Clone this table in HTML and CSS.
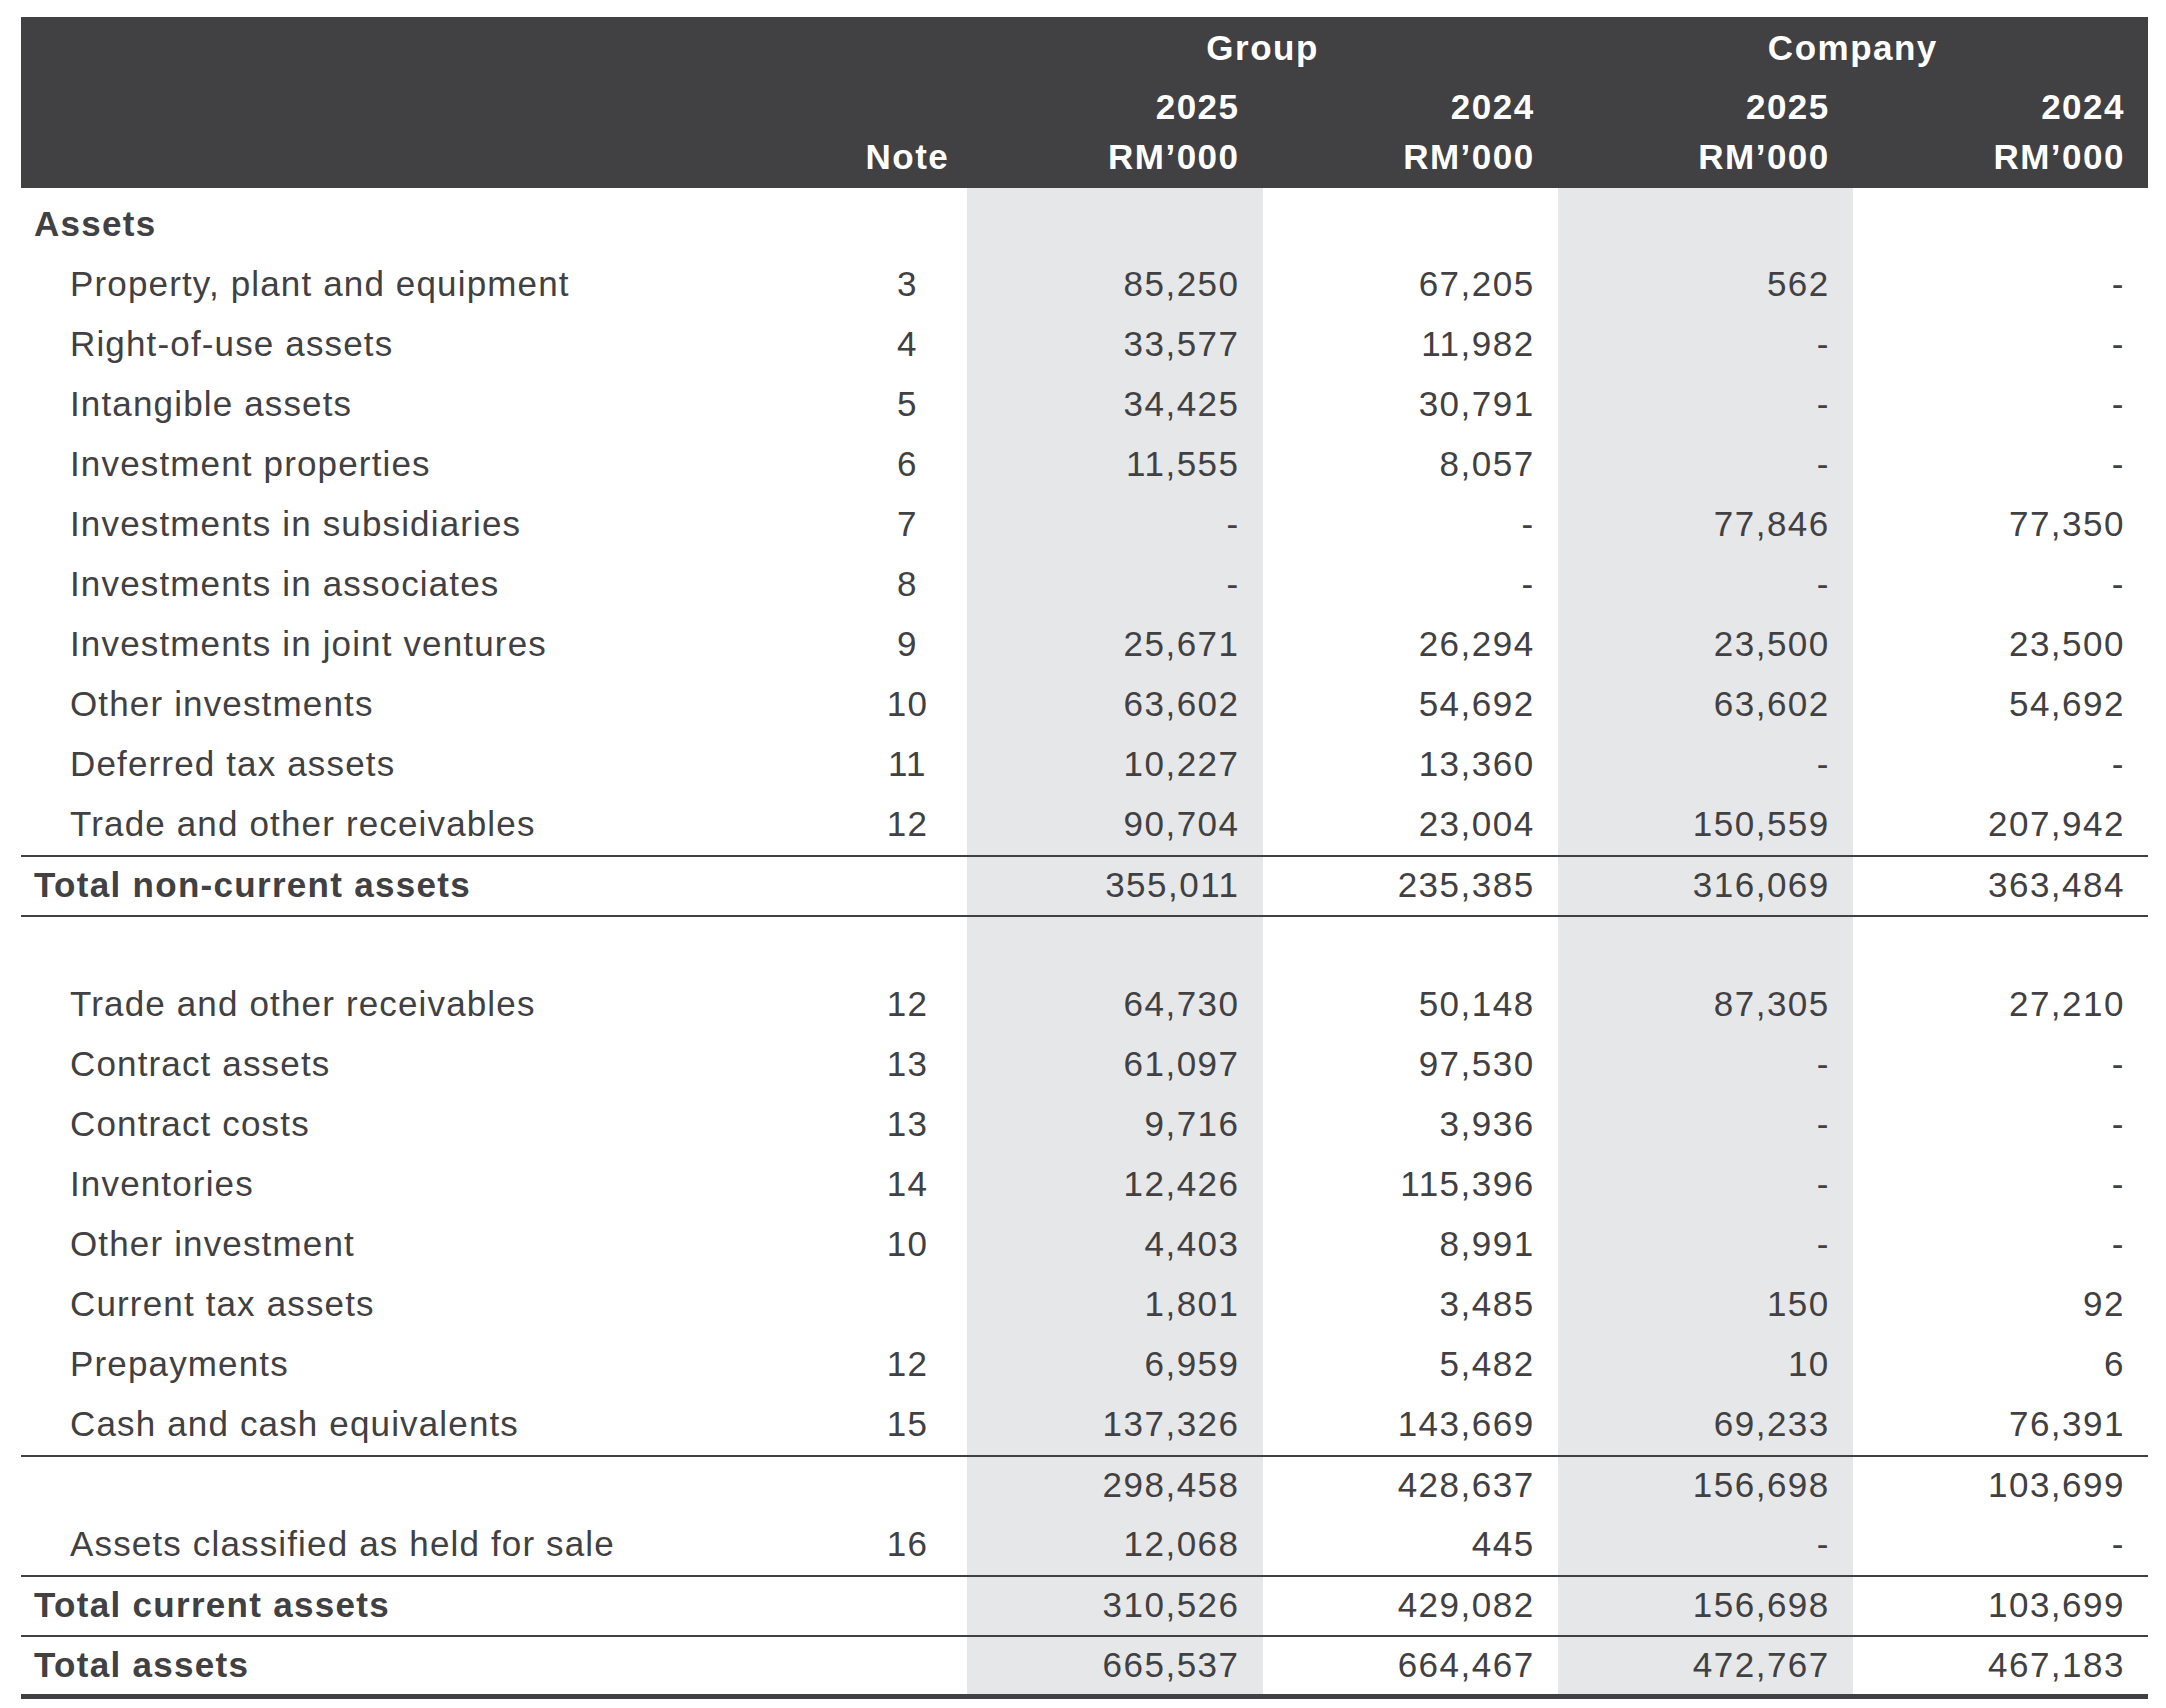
FILE: index.html
```html
<!DOCTYPE html>
<html lang="en">
<head>
<meta charset="utf-8">
<title>Statements of Financial Position</title>
<link rel="stylesheet" href="styles.css">
</head>
<body>
<div class="page">
<table class="sheet">
  <colgroup>
    <col class="c-label">
    <col class="c-note">
    <col class="c-num shade">
    <col class="c-num">
    <col class="c-num shade">
    <col class="c-num">
  </colgroup>
  <thead>
    <tr class="h1">
      <th></th><th></th>
      <th colspan="2" class="center">Group</th>
      <th colspan="2" class="center">Company</th>
    </tr>
    <tr class="h2">
      <th></th><th></th>
      <th class="num">2025</th><th class="num">2024</th><th class="num">2025</th><th class="num">2024</th>
    </tr>
    <tr class="h3">
      <th></th><th class="note">Note</th>
      <th class="num">RM’000</th><th class="num">RM’000</th><th class="num">RM’000</th><th class="num">RM’000</th>
    </tr>
  </thead>
  <tbody>
    <tr class="first"><td class="sec">Assets</td><td></td><td></td><td></td><td></td><td></td></tr>
    <tr><td class="item">Property, plant and equipment</td><td class="note">3</td><td class="num">85,250</td><td class="num">67,205</td><td class="num">562</td><td class="num">-</td></tr>
    <tr><td class="item">Right-of-use assets</td><td class="note">4</td><td class="num">33,577</td><td class="num">11,982</td><td class="num">-</td><td class="num">-</td></tr>
    <tr><td class="item">Intangible assets</td><td class="note">5</td><td class="num">34,425</td><td class="num">30,791</td><td class="num">-</td><td class="num">-</td></tr>
    <tr><td class="item">Investment properties</td><td class="note">6</td><td class="num">11,555</td><td class="num">8,057</td><td class="num">-</td><td class="num">-</td></tr>
    <tr><td class="item">Investments in subsidiaries</td><td class="note">7</td><td class="num">-</td><td class="num">-</td><td class="num">77,846</td><td class="num">77,350</td></tr>
    <tr><td class="item">Investments in associates</td><td class="note">8</td><td class="num">-</td><td class="num">-</td><td class="num">-</td><td class="num">-</td></tr>
    <tr><td class="item">Investments in joint ventures</td><td class="note">9</td><td class="num">25,671</td><td class="num">26,294</td><td class="num">23,500</td><td class="num">23,500</td></tr>
    <tr><td class="item">Other investments</td><td class="note">10</td><td class="num">63,602</td><td class="num">54,692</td><td class="num">63,602</td><td class="num">54,692</td></tr>
    <tr><td class="item">Deferred tax assets</td><td class="note">11</td><td class="num">10,227</td><td class="num">13,360</td><td class="num">-</td><td class="num">-</td></tr>
    <tr><td class="item">Trade and other receivables</td><td class="note">12</td><td class="num">90,704</td><td class="num">23,004</td><td class="num">150,559</td><td class="num">207,942</td></tr>
    <tr class="rule"><td class="sec">Total non-current assets</td><td class="note"></td><td class="num">355,011</td><td class="num">235,385</td><td class="num">316,069</td><td class="num">363,484</td></tr>
    <tr class="rule"><td></td><td></td><td></td><td></td><td></td><td></td></tr>
    <tr><td class="item">Trade and other receivables</td><td class="note">12</td><td class="num">64,730</td><td class="num">50,148</td><td class="num">87,305</td><td class="num">27,210</td></tr>
    <tr><td class="item">Contract assets</td><td class="note">13</td><td class="num">61,097</td><td class="num">97,530</td><td class="num">-</td><td class="num">-</td></tr>
    <tr><td class="item">Contract costs</td><td class="note">13</td><td class="num">9,716</td><td class="num">3,936</td><td class="num">-</td><td class="num">-</td></tr>
    <tr><td class="item">Inventories</td><td class="note">14</td><td class="num">12,426</td><td class="num">115,396</td><td class="num">-</td><td class="num">-</td></tr>
    <tr><td class="item">Other investment</td><td class="note">10</td><td class="num">4,403</td><td class="num">8,991</td><td class="num">-</td><td class="num">-</td></tr>
    <tr><td class="item">Current tax assets</td><td class="note"></td><td class="num">1,801</td><td class="num">3,485</td><td class="num">150</td><td class="num">92</td></tr>
    <tr><td class="item">Prepayments</td><td class="note">12</td><td class="num">6,959</td><td class="num">5,482</td><td class="num">10</td><td class="num">6</td></tr>
    <tr><td class="item">Cash and cash equivalents</td><td class="note">15</td><td class="num">137,326</td><td class="num">143,669</td><td class="num">69,233</td><td class="num">76,391</td></tr>
    <tr class="rule"><td></td><td class="note"></td><td class="num">298,458</td><td class="num">428,637</td><td class="num">156,698</td><td class="num">103,699</td></tr>
    <tr><td class="item">Assets classified as held for sale</td><td class="note">16</td><td class="num">12,068</td><td class="num">445</td><td class="num">-</td><td class="num">-</td></tr>
    <tr class="rule"><td class="sec">Total current assets</td><td class="note"></td><td class="num">310,526</td><td class="num">429,082</td><td class="num">156,698</td><td class="num">103,699</td></tr>
    <tr class="rule last"><td class="sec">Total assets</td><td class="note"></td><td class="num">665,537</td><td class="num">664,467</td><td class="num">472,767</td><td class="num">467,183</td></tr>
  </tbody>
</table>
</div>
</body>
</html>
```

FILE: styles.css
```css
html, body {
  margin: 0;
  padding: 0;
  background: #ffffff;
}

.page {
  padding: 17px 18px 0 21px;
}

.sheet {
  width: 2127px;
  table-layout: fixed;
  border-collapse: separate;
  border-spacing: 0;
  font-family: "Liberation Sans", Arial, Helvetica, sans-serif;
  font-size: 35px;
  line-height: 34px;
  letter-spacing: 1.3px;
  color: #414042;
}

.c-label { width: 826px; }
.c-note { width: 120px; }
.c-num { width: 295px; }
.shade { background: #e6e7e8; }

.sheet th,
.sheet td {
  padding: 0;
  white-space: nowrap;
}

/* header */
.sheet thead th {
  background: #414042;
  color: #ffffff;
  font-weight: bold;
  vertical-align: top;
  letter-spacing: 1.5px;
}
.sheet .h1 th { padding-top: 14px; }
.sheet .h2 th { padding-top: 25px; }
.sheet .h3 th { padding-top: 16px; padding-bottom: 14px; }
.sheet th.center { text-align: center; }

/* body */
.sheet tbody tr { height: 60px; }
.sheet tbody td {
  vertical-align: middle;
  padding-bottom: 2px;
}
.sheet tbody tr.first { height: 67px; }
.sheet tbody tr.first td { padding-top: 7px; }

.sec {
  font-weight: bold;
  padding-left: 13px !important;
}
.item {
  padding-left: 49px !important;
  letter-spacing: 1.15px;
}
.note { text-align: center; }
.sheet .num {
  text-align: right;
  padding-right: 23px;
  letter-spacing: 1.5px;
}

.sheet tbody tr.rule td { border-top: 2px solid #414042; }
.sheet tbody tr.last { height: 64px; }
.sheet tbody tr.last td { border-bottom: 5px solid #414042; }
```
